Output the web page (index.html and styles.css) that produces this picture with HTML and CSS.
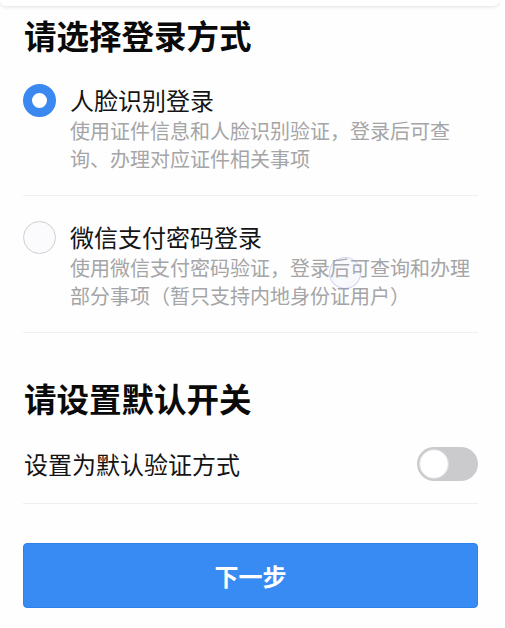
FILE: index.html
```html
<!DOCTYPE html>
<html lang="zh-CN">
<head>
    <meta charset="UTF-8">
    <meta name="viewport" content="width=device-width, initial-scale=1.0">
    <title>选择登录方式</title>
    <link rel="stylesheet" href="styles.css">
</head>
<body>
    <div class="top-card"></div>
    <div class="page">
        <h2 class="section-title">请选择登录方式</h2>

        <div class="option">
            <span class="radio checked"></span>
            <div class="option-body">
                <div class="option-title">人脸识别登录</div>
                <div class="option-desc">使用证件信息和人脸识别验证，登录后可查询、办理对应证件相关事项</div>
            </div>
        </div>

        <div class="option">
            <span class="radio"></span>
            <div class="option-body">
                <div class="option-title">微信支付密码登录</div>
                <div class="option-desc">使用微信支付密码验证，登录后可查询和办理部分事项（暂只支持内地身份证用户）</div>
            </div>
            <!-- touch indicator from the screen recording -->
            <span class="touch-dot"></span>
        </div>

        <h2 class="section-title second">请设置默认开关</h2>

        <div class="switch-row">
            <span class="switch-label">设置为默认验证方式</span>
            <span class="switch"><span class="knob"></span></span>
        </div>

        <button class="next-btn">下一步</button>
    </div>
</body>
</html>
```

FILE: styles.css
```css
body {
    font-family: "Noto Sans CJK SC", "Noto Sans", sans-serif;
    margin: 0;
    background-color: #fefefe;
    color: #111;
}
.top-card {
    height: 6px;
    margin-right: 6px;
    background-color: #fff;
    border-radius: 0 0 8px 8px;
    box-shadow: 0 1px 4px rgba(0, 0, 0, 0.12);
}
.page {
    padding: 13px 27px 0 23px;
}
.section-title {
    margin: 0;
    padding-left: 1px;
    font-size: 32.5px;
    line-height: 32px;
    font-weight: bold;
    color: #0a0a0a;
}
.section-title.second {
    margin-top: 49px;
}
.option {
    position: relative;
    display: flex;
    align-items: flex-start;
    padding: 25px 0 22px;
    border-bottom: 1px solid #efeff1;
}
.section-title + .option {
    padding-top: 33px;
}
.radio {
    flex: none;
    box-sizing: border-box;
    width: 33px;
    height: 33px;
    margin-right: 14px;
    border-radius: 50%;
    border: 1.5px solid #cfced2;
    background-color: #fbfafc;
}
.radio.checked {
    border: 9px solid #3b88f0;
    background-color: #fff;
}
.option-body {
    flex: 1;
}
.option-title {
    font-size: 24px;
    line-height: 32px;
    color: #141414;
}
.option-desc {
    font-size: 20px;
    line-height: 28px;
    color: #a5a5a7;
    margin-top: 1px;
}
.touch-dot {
    position: absolute;
    left: 306px;
    top: 61px;
    width: 30px;
    height: 30px;
    border-radius: 50%;
    border: 1.5px solid rgba(120, 130, 220, 0.3);
    background-color: rgba(200, 205, 240, 0.1);
}
.switch-row {
    display: flex;
    align-items: center;
    justify-content: space-between;
    padding: 33px 0 22px;
    border-bottom: 1px solid #efeff1;
}
.switch-label {
    padding-left: 1px;
    font-size: 24px;
    line-height: 32px;
    color: #141414;
}
.switch {
    box-sizing: border-box;
    width: 61px;
    height: 34px;
    padding: 2px;
    border-radius: 17px;
    background-color: #cbcacd;
}
.knob {
    display: block;
    box-sizing: border-box;
    width: 30px;
    height: 30px;
    border-radius: 50%;
    background-color: #fff;
    border: 1px solid #dcdcde;
}
.next-btn {
    display: block;
    width: 100%;
    height: 65px;
    margin-top: 39px;
    border: 1px solid #2f7fec;
    border-radius: 4px;
    background-color: #378bf3;
    color: #fff;
    font-family: inherit;
    font-size: 24px;
    font-weight: bold;
}
```
